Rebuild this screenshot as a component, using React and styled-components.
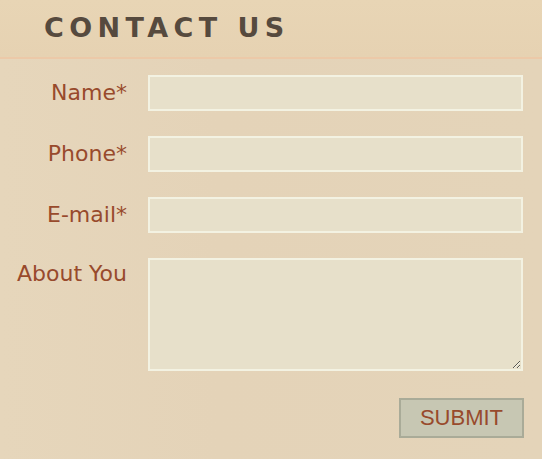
import React from 'react';
import styled, { createGlobalStyle } from 'styled-components';

const GlobalStyle = createGlobalStyle`
  html, body {
    margin: 0;
    padding: 0;
    background: #e4d4b9;
  }
`;

const Page = styled.div`
  width: 542px;
  height: 459px;
  background: linear-gradient(90deg, #e6d6bb 0%, #e4d3b8 40%, #e4d4b9 100%);
  font-family: "DejaVu Sans", Verdana, sans-serif;
  overflow: hidden;
`;

const Header = styled.div`
  height: 59px;
  box-sizing: border-box;
  padding: 12px 0 0 44px;
  background: linear-gradient(180deg, #e8d5b5 0%, #e6d2b2 100%);
  border-bottom: 2px solid #ecc9a8;
`;

const Title = styled.h1`
  margin: 0;
  font-family: "DejaVu Sans", Verdana, sans-serif;
  font-weight: bold;
  font-size: 27px;
  letter-spacing: 5.4px;
  color: #564a3e;
`;

const Form = styled.form`
  display: grid;
  grid-template-columns: 127px 375px;
  column-gap: 21px;
  row-gap: 25px;
  padding: 16px 0 0 0;
`;

const Label = styled.label`
  text-align: right;
  font-size: 22px;
  color: #984a2c;
  line-height: 36px;
  align-self: ${p => (p.top ? 'start' : 'center')};
  margin-top: ${p => (p.top ? '-2px' : '0')};
  white-space: nowrap;
`;

const Input = styled.input`
  box-sizing: border-box;
  width: 375px;
  height: 36px;
  margin: 0;
  background: #e7e0ca;
  border: 2px solid #f3f2e2;
  outline: none;
`;

const TextArea = styled.textarea`
  box-sizing: border-box;
  width: 375px;
  height: 113px;
  margin: 0;
  background: #e7e0ca;
  border: 2px solid #f3f2e2;
  outline: none;
  display: block;
`;

const Actions = styled.div`
  grid-column: 2;
  display: flex;
  justify-content: flex-end;
  margin-top: 2px;
`;

const Submit = styled.button`
  box-sizing: border-box;
  width: 125px;
  height: 40px;
  background: #c7c7b3;
  border: 2px solid #a9ab98;
  color: #984a2c;
  font-family: "Liberation Sans", Arial, sans-serif;
  font-size: 22px;
  padding: 0;
  margin-right: -1px;
`;

const fields = [
  { id: 'name', label: 'Name*' },
  { id: 'phone', label: 'Phone*' },
  { id: 'email', label: 'E-mail*' },
];

export default function App() {
  return (
    <Page>
      <GlobalStyle />
      <Header>
        <Title>CONTACT US</Title>
      </Header>
      <Form onSubmit={e => e.preventDefault()}>
        {fields.map(f => (
          <React.Fragment key={f.id}>
            <Label htmlFor={f.id}>{f.label}</Label>
            <Input id={f.id} type="text" />
          </React.Fragment>
        ))}
        <Label htmlFor="about" top>About You</Label>
        <TextArea id="about" />
        <Actions>
          <Submit type="submit">SUBMIT</Submit>
        </Actions>
      </Form>
    </Page>
  );
}
